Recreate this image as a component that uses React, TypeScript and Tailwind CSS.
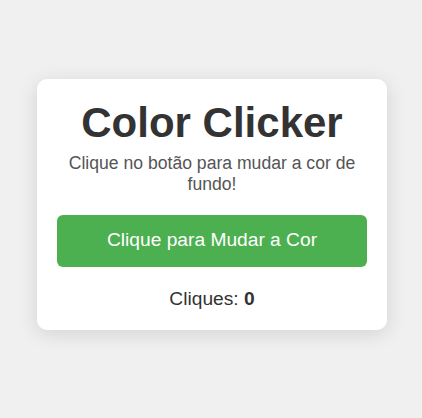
import { useState } from "react";

function App() {
  const [count, setCount] = useState(0);
  const [bg, setBg] = useState("#f0f0f0");

  const changeColor = () => {
    const hue = Math.floor(Math.random() * 360);
    setBg(`hsl(${hue}, 60%, 85%)`);
    setCount((c) => c + 1);
  };

  return (
    <div
      className="min-h-[418px] flex items-center justify-center pb-[9px] pl-[2px] font-['Liberation_Sans',Arial,sans-serif]"
      style={{ backgroundColor: bg }}
    >
      <div className="w-[350px] bg-white rounded-[10px] p-5 text-center shadow-[0_4px_20px_rgba(0,0,0,0.12)]">
        <h1 className="text-[42px] leading-[48px] font-bold text-[#333] m-0">
          Color Clicker
        </h1>
        <p className="text-[17.6px] leading-[20.2px] text-[#555] mt-[6px]">
          Clique no botão para mudar a cor de fundo!
        </p>
        <button
          onClick={changeColor}
          className="mt-[21px] w-full h-[52px] bg-[#4caf50] text-white text-[19.2px] rounded-[6px] cursor-pointer"
        >
          Clique para Mudar a Cor
        </button>
        <p className="mt-[21px] text-[19.2px] leading-[22px] text-[#333]">
          Cliques: <span className="font-bold">{count}</span>
        </p>
      </div>
    </div>
  );
}

export default App;
